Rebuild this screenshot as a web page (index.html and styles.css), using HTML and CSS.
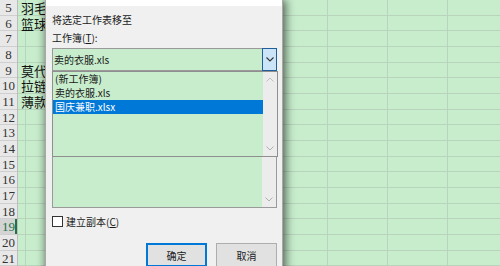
FILE: index.html
```html
<!DOCTYPE html>
<html lang="zh">
<head>
<meta charset="utf-8">
<link rel="stylesheet" href="styles.css">
</head>
<body>
<div class="sheet">
  <div class="headers">
    <div class="rh">5</div><div class="rh">6</div><div class="rh">7</div><div class="rh">8</div>
    <div class="rh">9</div><div class="rh">10</div><div class="rh">11</div><div class="rh">12</div>
    <div class="rh">13</div><div class="rh">14</div><div class="rh">15</div><div class="rh">16</div>
    <div class="rh">17</div><div class="rh">18</div><div class="rh sel">19</div><div class="rh">20</div>
    <div class="rh">21</div>
  </div>
  <div class="cells">
    <div class="row"><span class="txt">羽毛</span></div><div class="row"><span class="txt">篮球</span></div><div class="row"></div><div class="row"></div>
    <div class="row"><span class="txt">莫代</span></div><div class="row"><span class="txt">拉链</span></div><div class="row"><span class="txt">薄款</span></div><div class="row"></div>
    <div class="row"></div><div class="row"></div><div class="row"></div><div class="row"></div>
    <div class="row"></div><div class="row"></div><div class="row"></div><div class="row"></div>
    <div class="row"></div>
  </div>

  <div class="dialog">
    <div class="titlebar"></div>
    <div class="body">
      <div class="label first">将选定工作表移至</div>
      <div class="label">工作簿(<u>T</u>):</div>
      <div class="combo">
        <span class="combo-text">卖的衣服.xls</span>
        <span class="combo-btn">
          <svg width="8" height="5" viewBox="0 0 8 5"><path d="M0.5 0.5 L4 4 L7.5 0.5" fill="none" stroke="#333" stroke-width="1.1"/></svg>
        </span>
      </div>
      <div class="listbox">
        <div class="list-area"></div>
        <div class="scroll">
          <svg class="down" width="8" height="5" viewBox="0 0 8 5"><path d="M0.5 0.5 L4 4 L7.5 0.5" fill="none" stroke="#b0b0b0" stroke-width="1"/></svg>
        </div>
      </div>
      <div class="check-row">
        <span class="checkbox"></span>
        <span class="check-label">建立副本(<u>C</u>)</span>
      </div>
      <div class="buttons">
        <button class="btn primary">确定</button>
        <button class="btn">取消</button>
      </div>
    </div>

    <div class="dropdown">
      <div class="items">
        <div class="item">(新工作簿)</div>
        <div class="item">卖的衣服.xls</div>
        <div class="item selected">国庆兼职.xlsx</div>
      </div>
      <div class="scroll">
        <svg class="up" width="8" height="5" viewBox="0 0 8 5"><path d="M0.5 4.5 L4 1 L7.5 4.5" fill="none" stroke="#c0c0c0" stroke-width="1"/></svg>
        <svg class="down" width="8" height="5" viewBox="0 0 8 5"><path d="M0.5 0.5 L4 4 L7.5 0.5" fill="none" stroke="#b0b0b0" stroke-width="1"/></svg>
      </div>
    </div>
  </div>
</div>
</body>
</html>
```

FILE: styles.css
```css
html, body {
  margin: 0;
  padding: 0;
  width: 500px;
  height: 266px;
  overflow: hidden;
  background: #c7edcc;
}

.sheet {
  position: relative;
  display: flex;
  width: 500px;
  height: 266px;
  overflow: hidden;
}

.headers {
  width: 18px;
  flex: none;
  background: #e8e8e8;
  border-right: 1px solid #bdbdbd;
  box-sizing: border-box;
}

.rh {
  height: 15.67px;
  box-sizing: border-box;
  border-bottom: 1px solid #cfcfcf;
  font-family: "Liberation Serif", "DejaVu Serif", serif;
  font-size: 13px;
  line-height: 15px;
  color: #333;
  text-align: center;
}

.rh.sel {
  background: #d4d4d4;
  color: #217346;
  box-shadow: inset -2px 0 0 #217346;
}

.cells {
  flex: 1;
  background-image: repeating-linear-gradient(90deg, transparent 0 59px, #b8d4bd 59px 60px);
  background-position: 10px 0;
}

.row {
  height: 15.67px;
  box-sizing: border-box;
  border-bottom: 1px solid #b8d4bd;
  padding-left: 3px;
  font-family: "Noto Sans CJK SC", sans-serif;
  font-size: 13px;
  line-height: 15px;
  color: #111;
  white-space: nowrap;
}

.txt {
  display: inline-block;
  width: 25px;
  overflow: hidden;
  vertical-align: top;
}

/* dialog */
.dialog {
  position: absolute;
  left: 45px;
  top: 0;
  width: 238px;
  height: 272px;
  box-sizing: border-box;
  background: #f0f0f0;
  border-left: 1px solid #a8a8a8;
  border-right: 1px solid #a8a8a8;
  box-shadow: 4px 0 8px rgba(0, 0, 0, 0.45), -2px 0 7px rgba(0, 0, 0, 0.28);
  font-family: "Noto Sans CJK SC", sans-serif;
  font-size: 10px;
  color: #1a1a1a;
}

.titlebar {
  height: 6px;
  background: #ffffff;
}

.body {
  padding: 0 5px 0 6px;
  display: flex;
  flex-direction: column;
}

.label {
  line-height: 14px;
  margin-top: 4px;
}

.label.first {
  margin-top: 7px;
}

.combo {
  margin-top: 3px;
  height: 23px;
  box-sizing: border-box;
  border: 1px solid #9a9a9a;
  background: #c7edcc;
  display: flex;
  align-items: center;
  justify-content: space-between;
}

.combo-text {
  padding-left: 1px;
}

.combo-btn {
  width: 15px;
  height: 23px;
  margin: -1px -1px -1px 0;
  box-sizing: border-box;
  border: 1px solid #1e5f9c;
  background: #cce4f7;
  display: flex;
  align-items: center;
  justify-content: center;
}

.listbox {
  margin-top: 3px;
  height: 134px;
  box-sizing: border-box;
  border: 1px solid #9a9a9a;
  background: #c7edcc;
  display: flex;
}

.list-area {
  flex: 1;
}

.scroll {
  width: 14px;
  background: #ececec;
  display: flex;
  flex-direction: column;
  align-items: center;
  justify-content: space-between;
}

.listbox .scroll {
  justify-content: flex-end;
  padding-bottom: 5px;
  box-sizing: border-box;
}

.check-row {
  margin-top: 8px;
  display: flex;
  align-items: center;
  height: 11px;
}

.checkbox {
  width: 11px;
  height: 11px;
  box-sizing: border-box;
  border: 1px solid #333;
  background: #fff;
}

.check-label {
  margin-left: 3px;
  line-height: 11px;
}

.buttons {
  margin-top: 16px;
  display: flex;
  justify-content: flex-end;
  gap: 9px;
}

.btn {
  width: 61px;
  height: 24px;
  box-sizing: border-box;
  border: 1px solid #adadad;
  background: #e1e1e1;
  font-family: "Noto Sans CJK SC", sans-serif;
  font-size: 10px;
  color: #1a1a1a;
  padding: 0;
}

.btn.primary {
  border: 2px solid #0078d7;
}

/* dropdown list (overlay) */
.dropdown {
  position: absolute;
  left: 6px;
  top: 71px;
  width: 226px;
  height: 86px;
  box-sizing: border-box;
  border: 1px solid #8f8f8f;
  background: #c7edcc;
  display: flex;
}

.items {
  flex: 1;
}

.item {
  height: 14px;
  line-height: 14px;
  padding-left: 2px;
  white-space: nowrap;
}

.item.selected {
  background: #0078d7;
  color: #ffffff;
}

.dropdown .scroll {
  padding: 5px 0 5px;
  box-sizing: border-box;
}
```
